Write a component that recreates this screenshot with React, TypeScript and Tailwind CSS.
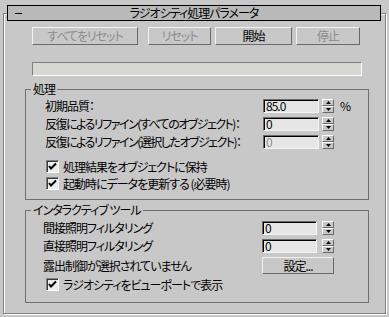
import React from "react";

const Btn = ({ label, w, disabled, className = "" }: { label: string; w: string; disabled?: boolean; className?: string }) => (
  <div
    className={`${w} ${className} h-[18px] flex items-center justify-center border border-t-[#f2f2f2] border-l-[#f2f2f2] border-b-[#6a6a6a] border-r-[#6a6a6a] ${
      disabled ? "text-[#8c8c8c]" : "text-black"
    }`}
  >
    {label}
  </div>
);

const Spin = ({ className = "" }: { className?: string }) => (
  <div className={`${className} w-[12px] h-[14px] flex flex-col`}>
    <div className="h-[7px] flex items-center justify-center border border-t-white border-l-white border-b-[#6a6a6a] border-r-[#6a6a6a]">
      <svg width="5" height="3" viewBox="0 0 5 3">
        <path d="M2.5 0 L5 3 L0 3 Z" fill="#000" />
      </svg>
    </div>
    <div className="h-[7px] flex items-center justify-center border border-t-white border-l-white border-b-[#6a6a6a] border-r-[#6a6a6a]">
      <svg width="5" height="3" viewBox="0 0 5 3">
        <path d="M0 0 L5 0 L2.5 3 Z" fill="#000" />
      </svg>
    </div>
  </div>
);

const Field = ({ value, w, disabled }: { value: string; w: string; disabled?: boolean }) => (
  <div
    className={`${w} h-[14px] flex items-center pl-[2px] bg-[#e6e6e6] border border-t-[#6b6b6b] border-l-[#6b6b6b] border-b-[#f4f4f4] border-r-[#f4f4f4] shadow-[inset_1px_1px_0_#000] leading-[12px] ${
      disabled ? "text-[#8c8c8c]" : "text-black"
    }`}
  >
    {value}
  </div>
);

const Check = ({ label, className = "" }: { label: string; className?: string }) => (
  <div className={`${className} flex items-center h-[13px]`}>
    <div className="w-[13px] h-[13px] flex items-center justify-center bg-[#ececec] border border-t-[#808080] border-l-[#808080] border-b-white border-r-white shadow-[inset_1px_1px_0_#3a3a3a]">
      <svg width="9" height="9" viewBox="0 0 9 9">
        <path d="M1 4 L3 6.5 L8 1.5" stroke="#000" strokeWidth="2" fill="none" />
      </svg>
    </div>
    <span className="ml-[4px]">{label}</span>
  </div>
);

export default function App() {
  return (
    <div className="w-[389px] h-[317px] overflow-hidden bg-[#c8c8c8] pt-[13px] px-[3px] text-[12px] leading-[14px] tracking-[-1px] text-black font-['Noto_Sans_CJK_JP',sans-serif] [font-feature-settings:'palt']">
      <div className="h-[301px] border border-[#808080] shadow-[inset_1px_1px_0_#fff,1px_1px_0_#fff]">
        {/* rollout title */}
        <div className="-mt-[9px] ml-[3px] w-[374px] h-[16px] flex items-center border border-black bg-[#b9b9b9]">
          <span className="ml-[7px] w-[7px] h-px bg-black" />
          <span className="flex-1 text-center">ラジオシティ処理パラメータ</span>
          <span className="w-[14px]" />
        </div>

        <div className="mt-[6px] ml-[28px] flex">
          <Btn label="すべてをリセット" w="w-[106px]" disabled />
          <Btn label="リセット" w="w-[63px]" disabled className="ml-[10px]" />
          <Btn label="開始" w="w-[77px]" className="ml-[4px]" />
          <Btn label="停止" w="w-[64px]" disabled className="ml-[4px]" />
        </div>

        <div className="mt-[17px] ml-[28px] w-[330px] h-[14px] bg-[#d8d8d0] border border-t-[#808080] border-l-[#808080] border-b-white border-r-white" />

        {/* 処理 */}
        <fieldset className="mt-[6px] ml-[21px] w-[344px] border border-[#6f6f6f] pb-[9px]">
          <legend className="ml-[5px] px-[2px] leading-[14px]">処理</legend>
          <div className="mt-[3px] flex items-center h-[14px] pl-[19px]">
            <span className="w-[218px]">初期品質：</span>
            <Field value="85.0" w="w-[56px]" />
            <Spin className="ml-[3px]" />
            <span className="ml-[6px]">%</span>
          </div>
          <div className="mt-[4px] flex items-center h-[14px] pl-[19px]">
            <span className="w-[218px] whitespace-nowrap tracking-[-1.5px]">反復によるリファイン(すべてのオブジェクト)：</span>
            <Field value="0" w="w-[56px]" />
            <Spin className="ml-[3px]" />
          </div>
          <div className="mt-[4px] flex items-center h-[14px] pl-[19px]">
            <span className="w-[218px] whitespace-nowrap tracking-[-1.5px]">反復によるリファイン(選択したオブジェクト)：</span>
            <Field value="0" w="w-[56px]" disabled />
            <Spin className="ml-[3px]" />
          </div>
          <Check label="処理結果をオブジェクトに保持" className="mt-[11px] ml-[20px]" />
          <Check label="起動時にデータを更新する (必要時)" className="mt-[4px] ml-[20px]" />
        </fieldset>

        {/* インタラクティブ ツール */}
        <fieldset className="mt-[3px] ml-[21px] w-[344px] border border-[#6f6f6f] pb-[11px]">
          <legend className="ml-[5px] px-[2px] leading-[14px]">インタラクティブ ツール</legend>
          <div className="mt-[4px] flex items-center h-[14px] pl-[17px]">
            <span className="w-[219px]">間接照明フィルタリング</span>
            <Field value="0" w="w-[55px]" />
            <Spin className="ml-[5px]" />
          </div>
          <div className="mt-[4px] flex items-center h-[14px] pl-[17px]">
            <span className="w-[219px]">直接照明フィルタリング</span>
            <Field value="0" w="w-[55px]" />
            <Spin className="ml-[5px]" />
          </div>
          <div className="mt-[4px] flex items-center pl-[17px]">
            <span className="w-[219px]">露出制御が選択されていません</span>
            <div className="w-[72px] h-[17px] flex items-center justify-center border border-t-[#f2f2f2] border-l-[#f2f2f2] border-b-[#6a6a6a] border-r-[#6a6a6a]">
              設定...
            </div>
          </div>
          <Check label="ラジオシティをビューポートで表示" className="mt-[4px] ml-[20px]" />
        </fieldset>
      </div>
    </div>
  );
}
